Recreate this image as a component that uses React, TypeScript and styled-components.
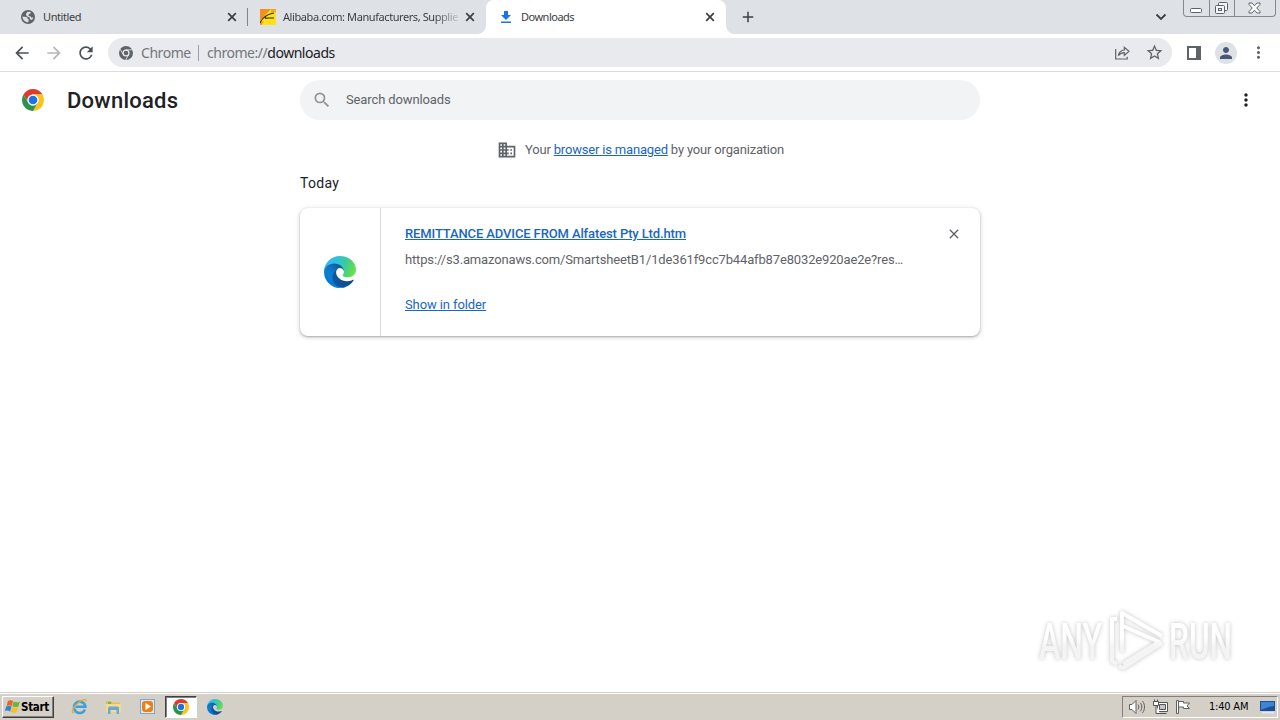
import React from 'react';
import styled, { createGlobalStyle } from 'styled-components';
import {
  MdAdd,
  MdArrowBack,
  MdArrowForward,
  MdClose,
  MdDomain,
  MdMoreVert,
  MdPerson,
  MdRefresh,
  MdSearch,
  MdStarBorder,
} from 'react-icons/md';

const GlobalStyle = createGlobalStyle`
  * {
    box-sizing: border-box;
  }

  body {
    margin: 0;
    background: #fff;
    overflow: hidden;
  }

  svg {
    display: block;
    flex: none;
  }
`;

const uiFont = `'Noto Sans', 'DejaVu Sans', sans-serif`;
const classicFont = `'DejaVu Sans Condensed', 'DejaVu Sans', sans-serif`;

const Screen = styled.div`
  position: relative;
  width: 1280px;
  height: 720px;
  display: flex;
  flex-direction: column;
  background: #fff;
  font-family: Roboto, sans-serif;
  white-space: nowrap;
`;

const TabStrip = styled.div`
  height: 34px;
  flex: none;
  display: flex;
  align-items: stretch;
  padding-left: 8px;
  background: #dee1e6;
`;

const Tab = styled.div<{ $width: number; $separator?: boolean }>`
  width: ${({ $width }) => $width}px;
  display: flex;
  align-items: center;
  padding: 0 8px 0 12px;
  color: #3c4043;
  background: ${({ $separator }) =>
    $separator ? 'linear-gradient(#80868b, #80868b) 100% 8px / 1px 18px no-repeat' : 'none'};
`;

const ActiveTab = styled(Tab)`
  position: relative;
  background: #fff;
  border-radius: 8px 8px 0 0;

  &::before,
  &::after {
    content: '';
    position: absolute;
    bottom: 0;
    width: 8px;
    height: 8px;
  }

  &::before {
    left: -8px;
    background: radial-gradient(circle at 0 0, transparent 7.5px, #fff 8px);
  }

  &::after {
    right: -8px;
    background: radial-gradient(circle at 100% 0, transparent 7.5px, #fff 8px);
  }
`;

const Favicon = styled.div`
  width: 16px;
  height: 16px;
  margin-right: 7px;
  display: flex;
  align-items: center;
  justify-content: center;
  color: #5f6368;
`;

const TabTitle = styled.div<{ $spacing: number; $fade?: boolean }>`
  flex: 1;
  min-width: 0;
  font: 11px/16px ${uiFont};
  letter-spacing: ${({ $spacing }) => $spacing}px;
  ${({ $fade }) =>
    $fade && 'mask-image: linear-gradient(90deg, #000 calc(100% - 24px), rgba(0, 0, 0, 0.15));'}
`;

const TabClose = styled.div`
  width: 16px;
  display: flex;
  justify-content: center;
  color: #3c4043;
  margin-left: 4px;
`;

const NewTab = styled.div`
  width: 28px;
  margin-left: 8px;
  display: flex;
  align-items: center;
  justify-content: center;
  color: #3c4043;
`;

const StripEnd = styled.div`
  margin-left: auto;
  display: flex;
  align-items: flex-start;
`;

const TabSearch = styled.div`
  padding: 13px 16px 0 0;
`;

const WindowControls = styled.div`
  height: 17px;
  width: 93px;
  margin-right: 4px;
  display: grid;
  grid-template-columns: 25px 25px 1fr;
  border: 1px solid #85898f;
  border-top: 0;
  border-radius: 0 0 4px 4px;
`;

const ControlCell = styled.div`
  display: flex;
  align-items: center;
  justify-content: center;

  & + & {
    border-left: 1px solid #85898f;
  }

  &:last-child {
    padding-right: 2px;
  }
`;

const Toolbar = styled.div`
  height: 38px;
  flex: none;
  display: flex;
  align-items: center;
  padding-left: 12px;
  border-bottom: 1px solid #dadce0;
`;

const ToolButton = styled.div<{ $disabled?: boolean }>`
  width: 20px;
  margin-right: 12px;
  display: flex;
  justify-content: center;
  color: ${({ $disabled }) => ($disabled ? '#b4b6b9' : '#4d5156')};
`;

const Omnibox = styled.div`
  width: 1064px;
  height: 29px;
  display: flex;
  align-items: center;
  padding: 0 8px 0 11px;
  border-radius: 15px;
  background: #e8eaed;
  font: 14px/20px ${uiFont};
  color: #73777c;
`;

const OmniLabel = styled.span`
  margin-left: 8px;
  width: 49px;
  letter-spacing: -0.45px;
`;

const OmniDivider = styled.span`
  width: 1px;
  height: 16px;
  margin: 0 8px;
  background: #9aa0a6;
`;

const OmniUrl = styled.span`
  letter-spacing: -0.47px;

  b {
    font-weight: 400;
    color: #202124;
  }
`;

const OmniActions = styled.div`
  margin-left: auto;
  display: flex;
  align-items: center;
  gap: 14px;
  color: #5f6368;
`;

const ToolbarEnd = styled.div`
  display: flex;
  align-items: center;
  margin-left: 15px;
  color: #5f6368;
`;

const Avatar = styled.div`
  width: 22px;
  height: 22px;
  margin: 0 12px 0 14px;
  border-radius: 50%;
  background: #dee1e6;
  color: #4a5878;
  display: flex;
  align-items: center;
  justify-content: center;
`;

const Page = styled.main`
  flex: 1;
  display: flex;
  flex-direction: column;
`;

const PageHeader = styled.header`
  height: 56px;
  display: grid;
  grid-template-columns: 300px 680px 1fr;
  align-items: center;
`;

const Brand = styled.div`
  display: flex;
  align-items: center;
  gap: 23px;
  padding-left: 22px;
`;

const PageTitle = styled.h1`
  margin: 0;
  padding-top: 2px;
  font-size: 22px;
  line-height: 28px;
  font-weight: 500;
  letter-spacing: 0.25px;
  color: #202124;
`;

const SearchField = styled.div`
  height: 40px;
  display: flex;
  align-items: center;
  gap: 14px;
  padding-left: 12px;
  border-radius: 20px;
  background: #f1f3f4;
  font-size: 13px;
  color: #5f6368;
  letter-spacing: -0.12px;

  svg {
    color: #8f9499;
  }

  span {
    padding-bottom: 2px;
  }
`;

const PageMenu = styled.div`
  justify-self: end;
  margin-right: 24px;
  color: #202124;
`;

const Content = styled.div`
  width: 680px;
  margin-left: 300px;
`;

const ManagedNotice = styled.div`
  height: 44px;
  display: flex;
  align-items: center;
  padding-left: 197px;
  font-size: 13px;
  letter-spacing: -0.18px;
  color: #5f6368;

  svg {
    margin-right: 8px;
  }

  span {
    padding-bottom: 2px;
  }
`;

const Link = styled.a`
  color: #1967c2;
  text-decoration: underline;
`;

const DateHeading = styled.div`
  height: 36px;
  padding-top: 1px;
  font-size: 14px;
  line-height: 20px;
  letter-spacing: 0.3px;
  color: #202124;
`;

const Card = styled.div`
  height: 128px;
  display: flex;
  border-radius: 8px;
  background: #fff;
  box-shadow: 0 1px 2px rgba(60, 64, 67, 0.35), 0 1px 4px 1px rgba(60, 64, 67, 0.16);
`;

const CardIcon = styled.div`
  width: 81px;
  display: flex;
  align-items: center;
  justify-content: center;
  border-right: 1px solid #d7d9dc;
`;

const CardBody = styled.div`
  flex: 1;
  padding: 16px 0 0 24px;
  font-size: 13px;
  line-height: 20px;
  letter-spacing: -0.1px;
`;

const FileName = styled(Link)`
  display: block;
  font-weight: 500;
  letter-spacing: -0.12px;
`;

const FileUrl = styled.div`
  margin: 6px 0 25px;
  letter-spacing: -0.15px;
  color: #5f6368;
`;

const CardClose = styled.div`
  padding: 18px 18px 0 0;
  color: #5f6368;
`;

const Taskbar = styled.footer`
  height: 28px;
  flex: none;
  display: flex;
  align-items: center;
  padding: 2px 2px 0;
  background: #d4d0c8;
  border-top: 1px solid #d4d0c8;
  box-shadow: inset 0 1px 0 #fff;
  font: 11px/14px ${classicFont};
  color: #000;
`;

const StartButton = styled.div`
  width: 52px;
  height: 22px;
  display: flex;
  align-items: center;
  padding-left: 1px;
  margin-bottom: 1px;
  border: 1px solid;
  border-color: #fff #404040 #404040 #fff;
  box-shadow: inset -1px -1px 0 #808080;
  font-size: 11.5px;
  font-weight: 700;
  letter-spacing: -0.3px;
`;

const QuickLaunch = styled.div`
  display: flex;
  align-items: center;
  margin: 0 0 2px 8px;
`;

const LaunchItem = styled.div<{ $active?: boolean }>`
  width: ${({ $active }) => ($active ? 32 : 34)}px;
  height: 22px;
  display: flex;
  align-items: center;
  justify-content: center;
  ${({ $active }) =>
    $active &&
    `
      margin: 0 1px;
      background: #fff;
      border: 1px solid;
      border-color: #404040 #fff #fff #404040;
      box-shadow: inset 1px 1px 0 #808080;
    `}
`;

const Tray = styled.div`
  width: 156px;
  height: 22px;
  margin: 0 0 1px auto;
  display: flex;
  align-items: center;
  padding-left: 5px;
  border: 1px solid;
  border-color: #808080 #fff #fff #808080;
`;

const TrayIcons = styled.div`
  display: flex;
  align-items: center;
  gap: 6px;
`;

const Clock = styled.span`
  width: 41px;
  margin: 0 10px 0 18px;
  letter-spacing: -0.2px;
`;

const Watermark = styled.svg`
  position: absolute;
  left: 1025px;
  top: 600px;
  overflow: visible;
  filter: drop-shadow(0 0 2px rgba(0, 0, 0, 0.24));
`;

const GlobeIcon = () => (
  <svg width="14" height="14" viewBox="0 0 14 14">
    <circle cx="7" cy="7" r="7" fill="#5f6368" />
    <path
      fill="#dee1e6"
      d="M1.6 6.500l3.400.6c1.500.2 1.800.9 1.500 1.900l1.300.4-.4 2.900C4 12.400 1.400 9.800 1.600 6.500zM6.500 1.700l3.300.3-.4 1.600-1.600.6-.3 1.700 1.900.4 1 1.500 1.900-.5c-.2 1-.6 1.900-1.300 2.800L9 9.200 8.600 7.500 5.700 6.300 4.900 4z"
    />
  </svg>
);

const ChromeLogo = ({ size }: { size: number }) => (
  <svg width={size} height={size} viewBox="2 2 44 44">
    <path fill="#de3b2f" d="M24 13H43.05A22 22 0 0 0 4.95 13L14.47 29.5A11 11 0 0 1 24 13z" />
    <path fill="#fcc31e" d="M43.05 13A22 22 0 0 1 24 46L33.53 29.5A11 11 0 0 0 24 13z" />
    <path fill="#2b9448" d="M4.95 13A22 22 0 0 0 24 46L33.53 29.5A11 11 0 0 1 14.47 29.5z" />
    <circle cx="24" cy="24" r="11" fill="#fff" />
    <circle cx="24" cy="24" r="8.7" fill="#1a73e8" />
  </svg>
);

const ChromeMono = () => (
  <svg width="14" height="14" viewBox="2 2 44 44">
    <circle cx="24" cy="24" r="22" fill="#5f6368" />
    <circle cx="24" cy="24" r="9.2" fill="none" stroke="#e8eaed" strokeWidth="4" />
    <path d="M24 14H45M15.3 29L4.6 10.5M32.7 29L22.3 47" stroke="#e8eaed" strokeWidth="2.6" />
  </svg>
);

const EdgeLogo = ({ size, id }: { size: number; id: string }) => (
  <svg width={size} height={size} viewBox="0 0 256 256">
    <defs>
      <linearGradient id={`${id}-a`} x1="60" y1="177" x2="241" y2="177" gradientUnits="userSpaceOnUse">
        <stop offset="0" stopColor="#0c59a4" />
        <stop offset="1" stopColor="#114a8b" />
      </linearGradient>
      <linearGradient id={`${id}-b`} x1="157" y1="100" x2="46" y2="221" gradientUnits="userSpaceOnUse">
        <stop offset="0" stopColor="#14549c" />
        <stop offset=".4" stopColor="#1273bf" />
        <stop offset=".75" stopColor="#0b80d4" />
        <stop offset="1" stopColor="#0078d4" />
      </linearGradient>
      <linearGradient id={`${id}-c`} x1="20" y1="50" x2="246" y2="135" gradientUnits="userSpaceOnUse">
        <stop offset="0" stopColor="#35b8f1" />
        <stop offset=".3" stopColor="#2fc0dc" />
        <stop offset=".6" stopColor="#3bcb9c" />
        <stop offset=".85" stopColor="#5cd85c" />
        <stop offset="1" stopColor="#6be352" />
      </linearGradient>
    </defs>
    <path
      fill={`url(#${id}-a)`}
      d="M231.07 190.54c-3.38 1.77-6.86 3.34-10.42 4.69a101.26 101.26 0 01-35.74 6.47c-47.1 0-88.14-32.4-88.14-73.98a31.4 31.4 0 0116.36-27.31c-42.6 1.8-53.55 46.2-53.55 72.2 0 73.54 67.78 80.99 82.38 80.99 7.87 0 19.74-2.3 26.87-4.54l1.3-.44a128.34 128.34 0 0066.6-52.8 4 4 0 00-5.66-5.28z"
    />
    <path
      fill={`url(#${id}-b)`}
      d="M105.73 241.42a79.2 79.2 0 01-22.74-21.34 80.72 80.72 0 0129.53-120c3.12-1.47 8.45-4.13 15.54-4a32.35 32.35 0 0125.69 13 31.88 31.88 0 016.36 18.66c0-.21 24.46-79.6-80-79.6-43.9 0-80 41.66-80 78.21a130.15 130.15 0 0012.11 56 128 128 0 00156.38 67.11 75.55 75.55 0 01-62.78-8z"
    />
    <path
      fill={`url(#${id}-c)`}
      d="M152.29 148.86c-.81 1.05-3.3 2.5-3.3 5.66 0 2.61 1.7 5.12 4.72 7.23 14.38 10 41.49 8.68 41.56 8.68a59.56 59.56 0 0030.27-8.35A61.38 61.38 0 00256 109.21c.26-22.41-8-37.31-11.34-43.91C223.46 23.84 177.72 0 128 0A128 128 0 000 126.2c.48-36.54 36.8-66.05 80-66.05 3.5 0 23.46.34 42 10.07 16.34 8.58 24.9 18.94 30.85 29.21 6.18 10.67 7.28 24.15 7.28 29.52s-2.74 13.33-7.8 19.91z"
    />
  </svg>
);

const CloseGlyph = () => (
  <svg width="10" height="10" viewBox="0 0 10 10">
    <path d="M1.2 1.2l7.6 7.6M8.8 1.2L1.2 8.8" stroke="currentColor" strokeWidth="1.7" />
  </svg>
);

const AlibabaIcon = () => (
  <svg width="16" height="16" viewBox="0 0 16 16">
    <path fill="#ffe01a" d="M0 0h16v16H0z" />
    <path fill="#f2901d" d="M0 0h11L6 5 0 12z" />
    <path fill="#f7a51c" d="M11 0h5v3l-5 1zM0 13l4-1-2 4H0z" />
    <path
      d="M0 14C2 9 6 5.500 14 4M6 7.500C4.500 9.500 5.500 9.500 8 9h6"
      fill="none"
      stroke="#33260a"
      strokeWidth="1.100"
    />
  </svg>
);

const DownloadIcon = () => (
  <svg width="12" height="14" viewBox="0 0 12 14">
    <path fill="#1a73e8" d="M4 1h4v4h3L6 10 1 5h3zM1 11.4h10V13H1z" />
  </svg>
);

const ShareIcon = () => (
  <svg width="17" height="16" viewBox="0 0 17 16" fill="none" stroke="#5f6368" strokeWidth="1.2">
    <path d="M2.200 4.500H1.7V14h11.5v-2.3" />
    <path d="M4.3 10.5C5 7 7.3 5.2 10.3 5V2.2L15 6.3l-4.7 4.1V7.7C7.7 7.7 6 8.4 4.3 10.5z" />
  </svg>
);

const WindowsFlag = () => (
  <svg width="17" height="16" viewBox="0 0 17 16">
    <path fill="#e8622a" d="M4 2c2-1 3.500-.8 5 .1L7.700 7C6 6 4.500 6 2.600 6.700z" />
    <path fill="#6fb23a" d="M9.600 2.600c1.500.9 3.900 1 6.200.1l-1.400 4.700c-2 .9-4.200.8-6.100-.1z" />
    <path fill="#2f83d4" d="M2.300 7.400c2-.9 3.600-.7 5.200.2L6.200 12.500C4.600 11.500 3 11.300.8 12z" />
    <path fill="#f6c11f" d="M8.100 8c1.600.9 3.800 1 6.100.2l-1.400 4.900c-2 .9-4.200.8-6-.1z" />
  </svg>
);

const ExplorerIcon = () => (
  <svg width="17" height="17" viewBox="0 0 17 17">
    <path d="M14 11.500A5.700 5.700 0 1 1 14.400 8.800H5" fill="none" stroke="#3f9fdc" strokeWidth="2.600" />
    <path
      d="M3 14.500C-.5 15.500 2 9 7 5s9-4.500 8-1.500"
      fill="none"
      stroke="#dcae3a"
      strokeWidth="1.300"
    />
  </svg>
);

const FolderIcon = () => (
  <svg width="17" height="16" viewBox="0 0 17 16">
    <path fill="#e5bd57" d="M1 2h5l1 1.500h8V13H1z" />
    <path fill="#6bb36a" d="M3 3h3v2H3z" />
    <path fill="#f3dc8c" d="M1 5h15v8H1z" />
    <path fill="#6aa9d2" d="M3 9.500C3 8 4 7.500 5 7.500h7c1.500 0 2 .8 2 2V15h-2.500v-4h-6v4H3z" />
  </svg>
);

const MediaIcon = () => (
  <svg width="17" height="17" viewBox="0 0 17 17">
    <path fill="#7fa6cd" d="M1 1h15v15H1z" />
    <path fill="#dbe9f5" d="M2 2h13v13H2z" />
    <rect x="3" y="3" width="11" height="11" rx="3" fill="#ee8115" />
    <path fill="#fff" d="M6.500 5l5.500 3.500L6.500 12z" />
  </svg>
);

const SpeakerIcon = () => (
  <svg width="18" height="16" viewBox="0 0 18 16" stroke="#606060" strokeWidth="1">
    <path fill="#fff" d="M1.500 5.500H4l4-4v13l-4-4H1.500z" />
    <path fill="none" d="M10 5.500c1 1.500 1 3.500 0 5M12.300 3.800c2 2.500 2 6 0 8.500M14.500 2c2.700 3.500 2.700 8.500 0 12" />
  </svg>
);

const NetworkIcon = () => (
  <svg width="17" height="16" viewBox="0 0 17 16" stroke="#555" strokeWidth="1">
    <path fill="#fff" d="M5.500 3.500h10v9h-10zM6.500 14.500h8" />
    <path fill="#c4c4c4" d="M7.500 5.500h6v5h-6z" />
    <path fill="#fff" d="M1.500 2.500h5v4h-5zM2.500.5v2M5.500.5v2M4 6.500v8h4" />
  </svg>
);

const FlagIcon = () => (
  <svg width="16" height="16" viewBox="0 0 16 16" stroke="#606060" strokeWidth="1">
    <path fill="#fff" d="M1.500 1.500h2v13h-2zM3.500 2.500h5v1.500h6l-2.500 3 2.500 2.500H8.500V8h-5z" />
  </svg>
);

const DesktopIcon = () => (
  <svg width="17" height="14" viewBox="0 0 17 14">
    <path fill="#1d4f96" d="M0 1h15v10H0z" />
    <path fill="#3d86d4" d="M1 2h13v4C10 6 6 8 1 10z" />
    <path fill="#dfe8f2" d="M2 12h12v1.500H2z" />
  </svg>
);

const App: React.FC = () => (
  <>
    <GlobalStyle />
    <Screen>
      <TabStrip>
        <Tab $width={240} $separator>
          <Favicon>
            <GlobeIcon />
          </Favicon>
          <TabTitle $spacing={-0.4}>Untitled</TabTitle>
          <TabClose>
            <CloseGlyph />
          </TabClose>
        </Tab>
        <Tab $width={238}>
          <Favicon>
            <AlibabaIcon />
          </Favicon>
          <TabTitle $fade $spacing={-0.42}>
            Alibaba.com: Manufacturers, Supplie
          </TabTitle>
          <TabClose>
            <CloseGlyph />
          </TabClose>
        </Tab>
        <ActiveTab $width={240}>
          <Favicon>
            <DownloadIcon />
          </Favicon>
          <TabTitle $spacing={-0.5}>Downloads</TabTitle>
          <TabClose>
            <CloseGlyph />
          </TabClose>
        </ActiveTab>
        <NewTab>
          <MdAdd size={18} />
        </NewTab>
        <StripEnd>
          <TabSearch>
            <svg width="12" height="8" viewBox="0 0 12 8">
              <path d="M1.500 1.500L6 6l4.500-4.500" fill="none" stroke="#3c4043" strokeWidth="1.800" />
            </svg>
          </TabSearch>
          <WindowControls>
            <ControlCell>
              <svg width="13" height="12" viewBox="0 0 13 12">
                <rect x=".5" y="6.500" width="11" height="4" rx="1" fill="#fff" stroke="#5d6167" />
              </svg>
            </ControlCell>
            <ControlCell>
              <svg width="14" height="14" viewBox="0 0 14 14" fill="#f4f5f7" stroke="#5d6167">
                <rect x="3.500" y="1.500" width="9" height="8" rx="1" />
                <rect x=".5" y="4.500" width="9" height="8" rx="1" />
                <rect x="3.500" y="7.500" width="3" height="2" />
              </svg>
            </ControlCell>
            <ControlCell>
              <svg width="13" height="12" viewBox="0 0 13 12">
                <path
                  d="M1 1h3l2.500 2.800L9 1h3v1.500L8.700 6 12 9.500V11H9L6.500 8.200 4 11H1V9.500L4.300 6 1 2.500z"
                  fill="#fff"
                  stroke="#5d6167"
                />
              </svg>
            </ControlCell>
          </WindowControls>
        </StripEnd>
      </TabStrip>

      <Toolbar>
        <ToolButton>
          <MdArrowBack size={20} />
        </ToolButton>
        <ToolButton $disabled>
          <MdArrowForward size={20} />
        </ToolButton>
        <ToolButton>
          <MdRefresh size={20} />
        </ToolButton>
        <Omnibox>
          <ChromeMono />
          <OmniLabel>Chrome</OmniLabel>
          <OmniDivider />
          <OmniUrl>
            chrome://<b>downloads</b>
          </OmniUrl>
          <OmniActions>
            <ShareIcon />
            <MdStarBorder size={19} />
          </OmniActions>
        </Omnibox>
        <ToolbarEnd>
          <svg width="14" height="14" viewBox="0 0 14 14">
            <path fill="#5f6368" fillRule="evenodd" d="M0 0h14v14H0zM2 2v10h7V2z" />
          </svg>
          <Avatar>
            <MdPerson size={18} />
          </Avatar>
          <MdMoreVert size={19} />
        </ToolbarEnd>
      </Toolbar>

      <Page>
        <PageHeader>
          <Brand>
            <ChromeLogo size={22} />
            <PageTitle>Downloads</PageTitle>
          </Brand>
          <SearchField>
            <MdSearch size={20} />
            <span>Search downloads</span>
          </SearchField>
          <PageMenu>
            <MdMoreVert size={20} />
          </PageMenu>
        </PageHeader>
        <Content>
          <ManagedNotice>
            <MdDomain size={20} />
            <span>
              Your <Link>browser is managed</Link> by your organization
            </span>
          </ManagedNotice>
          <DateHeading>Today</DateHeading>
          <Card>
            <CardIcon>
              <EdgeLogo size={32} id="card" />
            </CardIcon>
            <CardBody>
              <FileName>REMITTANCE ADVICE FROM Alfatest Pty Ltd.htm</FileName>
              <FileUrl>https://s3.amazonaws.com/SmartsheetB1/1de361f9cc7b44afb87e8032e920ae2e?res…</FileUrl>
              <Link>Show in folder</Link>
            </CardBody>
            <CardClose>
              <MdClose size={16} />
            </CardClose>
          </Card>
        </Content>
      </Page>

      <Taskbar>
        <StartButton>
          <WindowsFlag />
          Start
        </StartButton>
        <QuickLaunch>
          <LaunchItem>
            <ExplorerIcon />
          </LaunchItem>
          <LaunchItem>
            <FolderIcon />
          </LaunchItem>
          <LaunchItem>
            <MediaIcon />
          </LaunchItem>
          <LaunchItem $active>
            <ChromeLogo size={16} />
          </LaunchItem>
          <LaunchItem>
            <EdgeLogo size={16} id="bar" />
          </LaunchItem>
        </QuickLaunch>
        <Tray>
          <TrayIcons>
            <SpeakerIcon />
            <NetworkIcon />
            <FlagIcon />
          </TrayIcons>
          <Clock>1:40 AM</Clock>
          <DesktopIcon />
        </Tray>
      </Taskbar>

      <Watermark width="220" height="80" viewBox="0 0 220 80">
        <defs>
          <linearGradient id="mark" x1="0" y1="10" x2="0" y2="70" gradientUnits="userSpaceOnUse">
            <stop offset=".45" stopColor="#fff" />
            <stop offset=".6" stopColor="#f4f4f4" />
          </linearGradient>
        </defs>
        <g fill="url(#mark)" fontFamily="Roboto, sans-serif" fontSize="50" fontWeight="500">
          <text x="14" y="59" textLength="63" lengthAdjust="spacingAndGlyphs">
            ANY
          </text>
          <text x="144" y="59" textLength="63" lengthAdjust="spacingAndGlyphs">
            RUN
          </text>
        </g>
        <g fill="none" stroke="url(#mark)" strokeWidth="4" strokeLinejoin="round">
          <path d="M97 52V13l40 23" />
          <path d="M98 26l36 16-36 22" />
          <path d="M137 43L98 68l-4-2" />
          <path d="M92 19h-5v42l5 3" />
        </g>
      </Watermark>
    </Screen>
  </>
);

export default App;
